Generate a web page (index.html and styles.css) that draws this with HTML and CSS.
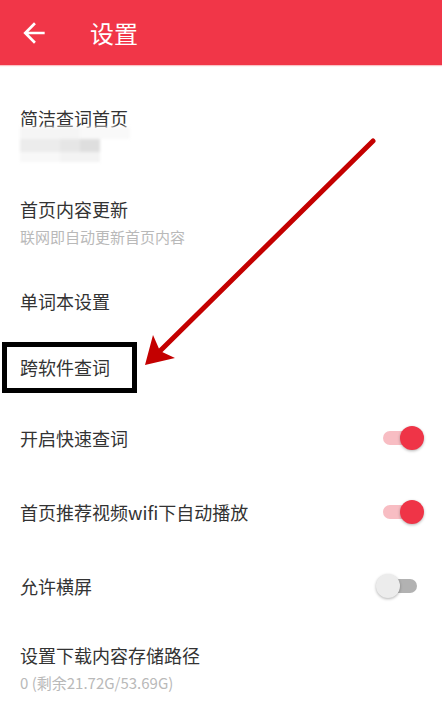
FILE: index.html
```html
<!DOCTYPE html>
<html lang="zh">
<head>
<meta charset="utf-8">
<title>设置</title>
<link rel="stylesheet" href="styles.css">
</head>
<body>
<div class="page">
  <header class="appbar">
    <svg class="back" viewBox="0 0 24 24" width="32" height="32"><path fill="#fff" d="M20 11H7.83l5.59-5.59L12 4l-8 8 8 8 1.41-1.41L7.83 13H20v-2z"/></svg>
    <div class="title">设置</div>
  </header>
  <main class="list">
    <div class="row row-first">
      <div class="text">
        <div class="label">简洁查词首页</div>
        <div class="blurred">
          <div class="strip s1"><span class="b b1"></span><span class="b b2"></span></div>
          <div class="strip s2"><span class="b b3"></span><span class="b b4"></span><span class="b b5"></span></div>
          <div class="strip s3"><span class="b b6"></span><span class="b b7"></span></div>
        </div>
      </div>
    </div>
    <div class="row">
      <div class="text">
        <div class="label">首页内容更新</div>
        <div class="sub">联网即自动更新首页内容</div>
      </div>
    </div>
    <div class="row">
      <div class="text"><div class="label">单词本设置</div></div>
    </div>
    <div class="row row-boxed">
      <div class="text"><div class="label">跨软件查词</div></div>
    </div>
    <div class="row row-switch">
      <div class="text"><div class="label">开启快速查词</div></div>
      <div class="switch on"><span class="track"></span><span class="knob"></span></div>
    </div>
    <div class="row row-switch">
      <div class="text"><div class="label">首页推荐视频wifi下自动播放</div></div>
      <div class="switch on"><span class="track"></span><span class="knob"></span></div>
    </div>
    <div class="row row-switch">
      <div class="text"><div class="label">允许横屏</div></div>
      <div class="switch off"><span class="track"></span><span class="knob"></span></div>
    </div>
    <div class="row row-last">
      <div class="text">
        <div class="label">设置下载内容存储路径</div>
        <div class="sub">0 (剩余21.72G/53.69G)</div>
      </div>
    </div>
  </main>
  <div class="mark-box"></div>
  <svg class="mark-arrow" viewBox="0 0 442 710" width="442" height="710">
    <line x1="373" y1="141" x2="160" y2="351" stroke="#c40000" stroke-width="5" stroke-linecap="round"/>
    <polygon points="145,365 153,335 160,351 175,358" fill="#c40000"/>
  </svg>
</div>
</body>
</html>
```
FILE: styles.css
```css
* { box-sizing: border-box; }
html, body { margin: 0; padding: 0; background: #fff; }
body {
  font-family: "Noto Sans CJK SC", Roboto, "Noto Sans", sans-serif;
  color: #333;
}
.page {
  position: relative;
  width: 442px;
  height: 710px;
  overflow: hidden;
}
.appbar {
  height: 65px;
  background: #f13648;
  display: flex;
  align-items: center;
  padding-left: 18px;
  box-shadow: 0 1px 1px rgba(240, 80, 90, 0.35);
}
.back { display: block; margin-top: 0; }
.title {
  color: #fff;
  font-size: 24px;
  line-height: 32px;
  margin-left: 40px;
}
.list { display: flex; flex-direction: column; }
.row {
  display: flex;
  align-items: center;
  justify-content: space-between;
  padding: 21px 18px 21px 20px;
}
.row-first { padding-top: 41px; padding-bottom: 14px; }
.row-boxed { padding-bottom: 22px; }
.row-switch { padding-top: 25px; padding-bottom: 25px; }
.row-last { padding-top: 20px; }
.text { display: flex; flex-direction: column; }
.label {
  font-size: 18px;
  line-height: 24px;
  color: #333;
}
.sub {
  font-size: 15px;
  line-height: 20px;
  color: #b9b9b9;
  margin-top: 6px;
}
.blurred {
  margin-top: -3px;
  height: 35px;
  width: 120px;
  display: flex;
  flex-direction: column;
  filter: blur(1.5px);
}
.strip { display: flex; }
.s1 { height: 12px; }
.s2 { height: 13px; }
.s3 { height: 10px; }
.b { display: block; height: 100%; }
.b1 { width: 60px; background: #f5f5f5; }
.b2 { width: 50px; background: #f9f9f9; }
.b3 { width: 40px; background: #ececec; }
.b4 { width: 20px; background: #e6e6e6; }
.b5 { width: 20px; background: #dedede; }
.b6 { width: 40px; background: #f8f8f8; }
.b7 { width: 40px; background: #f3f3f3; }
.switch {
  position: relative;
  width: 48px;
  height: 24px;
  display: flex;
  align-items: center;
}
.track {
  display: block;
  width: 34px;
  height: 14px;
  border-radius: 7px;
  margin-left: 7px;
}
.knob {
  position: absolute;
  top: 0;
  width: 24px;
  height: 24px;
  border-radius: 50%;
  box-shadow: 0 1px 3px rgba(0, 0, 0, 0.3);
}
.switch.on .track { background: #f8bdc3; }
.switch.on .knob { right: 0; background: #ef3447; }
.switch.off .track { background: #b2b2b2; }
.switch.off .knob { left: 0; background: #ececec; }
.mark-box {
  position: absolute;
  left: 2px;
  top: 342px;
  width: 135px;
  height: 51px;
  border: 5px solid #000;
}
.mark-arrow {
  position: absolute;
  left: 0;
  top: 0;
  pointer-events: none;
}
```
